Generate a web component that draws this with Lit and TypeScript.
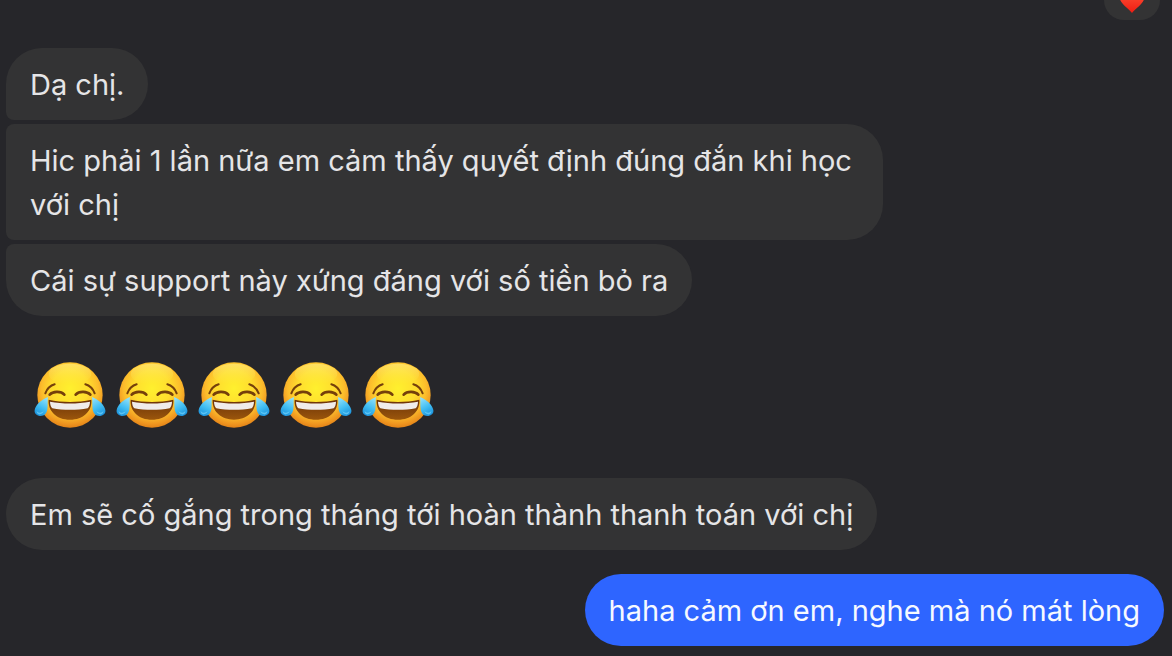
import { LitElement, html, css, svg } from "lit";
import { customElement, property } from "lit/decorators.js";
import { classMap } from "lit/directives/class-map.js";

type Position = "single" | "first" | "middle" | "last";

interface Message {
  text: string;
  position: Position;
}

@customElement("chat-bubble")
class ChatBubble extends LitElement {
  @property() text = "";
  @property() position: Position = "single";
  @property({ type: Boolean }) own = false;

  static styles = css`
    :host {
      display: flex;
    }
    .bubble {
      box-sizing: border-box;
      max-width: 877px;
      margin: 0;
      padding: 15px 24px 13px;
      border-radius: 36px;
      background: #333334;
      color: #e5e5e7;
    }
    .own {
      margin-left: auto;
      background: #2e65ff;
      color: #f6f9ff;
    }
    .first,
    .middle {
      border-bottom-left-radius: 8px;
    }
    .middle,
    .last {
      border-top-left-radius: 8px;
    }
  `;

  render() {
    const classes = { bubble: true, own: this.own, [this.position]: true };
    return html`<p class=${classMap(classes)}>${this.text}</p>`;
  }
}

@customElement("joy-emoji")
class JoyEmoji extends LitElement {
  static styles = css`
    :host {
      display: block;
    }
    .icon {
      display: block;
      width: 82px;
      height: 70px;
    }
  `;

  render() {
    const tear = svg`
      <path d="M84 141C66 148 47 163 44 180C42 191 51 198 62 198C73 198 80 191 82 178C84 166 82 152 84 141Z" fill="url(#tear)"/>
      <path d="M50 182C53 189 63 190 71 184C67 196 49 197 50 182Z" fill="#7fdcff" opacity=".6"/>`;
    return html`
      <svg class="icon" viewBox="27 30 246 210" role="img" aria-label="😂">
        <defs>
          <radialGradient id="face" cx="50%" cy="40%" r="62%">
            <stop offset="0" stop-color="#fff02e" />
            <stop offset=".45" stop-color="#ffdd2e" />
            <stop offset=".7" stop-color="#fcbc2c" />
            <stop offset=".88" stop-color="#ef951f" />
            <stop offset="1" stop-color="#dd7c16" />
          </radialGradient>
          <linearGradient id="shine" x1="0" y1="0" x2="0" y2="1">
            <stop offset="0" stop-color="#fff08a" stop-opacity=".6" />
            <stop offset="1" stop-color="#fff04a" stop-opacity="0" />
          </linearGradient>
          <linearGradient id="mouth" x1="0" y1="0" x2="0" y2="1">
            <stop offset="0" stop-color="#6b3208" />
            <stop offset="1" stop-color="#9b560c" />
          </linearGradient>
          <linearGradient id="tear" x1=".7" y1="0" x2=".3" y2="1">
            <stop offset="0" stop-color="#8fe0fb" />
            <stop offset=".55" stop-color="#3fbcf2" />
            <stop offset="1" stop-color="#1a90da" />
          </linearGradient>
        </defs>
        <circle cx="150" cy="135" r="98" fill="url(#face)" />
        <ellipse cx="150" cy="72" rx="64" ry="31" fill="url(#shine)" />
        <g fill="none" stroke="#75400b" stroke-linecap="round">
          <path d="M76 130C81 117 90 107 104 103" stroke-width="6" />
          <path d="M224 130C219 117 210 107 196 103" stroke-width="6" />
          <path d="M89 134C98 124 122 122 133 134" stroke-width="8" />
          <path d="M167 134C178 122 202 124 211 134" stroke-width="8" />
        </g>
        <path
          d="M86 149C126 158 174 158 214 149C217 183 190 209 150 209C110 209 83 183 86 149Z"
          fill="url(#mouth)"
        />
        <path
          d="M90 155C128 162 172 162 210 155C210 164 207 171 203 175C171 181 129 181 97 175C93 171 90 164 90 155Z"
          fill="#f0ecea"
        />
        <g>${tear}</g>
        <g transform="matrix(-1 0 0 1 300 0)">${tear}</g>
      </svg>
    `;
  }
}

@customElement("app-root")
class AppRoot extends LitElement {
  private opening: Message[] = [
    { text: "Dạ chị.", position: "first" },
    {
      text: "Hic phải 1 lần nữa em cảm thấy quyết định đúng đắn khi học với chị",
      position: "middle",
    },
    { text: "Cái sự support này xứng đáng với số tiền bỏ ra", position: "last" },
  ];

  static styles = css`
    :host {
      display: block;
      box-sizing: border-box;
      min-height: 100vh;
      overflow: hidden;
      padding: 0 8px 10px 6px;
      background: #26262a;
      font-family: Inter, "Noto Sans", sans-serif;
      font-size: 29px;
      line-height: 44px;
    }
    .reaction {
      display: flex;
      justify-content: center;
      align-items: center;
      width: 56px;
      height: 40px;
      margin: -20px 4px 28px auto;
      border-radius: 20px;
      background: #333334;
    }
    .heart {
      width: 28px;
      height: 26px;
    }
    .group {
      display: flex;
      flex-direction: column;
      gap: 4px;
    }
    .emojis {
      display: flex;
      padding: 44px 23px 48px;
    }
    .reply {
      margin-top: 24px;
    }
  `;

  render() {
    return html`
      <main>
        <div class="reaction">
          <svg class="heart" viewBox="0 0 28 26" role="img" aria-label="❤️">
            <defs>
              <linearGradient id="red" x1="0" y1="0" x2="0" y2="1">
                <stop offset="0" stop-color="#ff5a3c" />
                <stop offset="1" stop-color="#f01c12" />
              </linearGradient>
            </defs>
            <path
              d="M14 26C10 21 1 16 1 8C1 3 4 1 8 1C11 1 13 3 14 5C15 3 17 1 20 1C24 1 27 3 27 8C27 16 18 21 14 26Z"
              fill="url(#red)"
            />
          </svg>
        </div>
        <section class="group">
          ${this.opening.map(
            (m) => html`<chat-bubble .text=${m.text} .position=${m.position}></chat-bubble>`
          )}
        </section>
        <div class="emojis">
          ${Array.from({ length: 5 }, () => html`<joy-emoji></joy-emoji>`)}
        </div>
        <chat-bubble text="Em sẽ cố gắng trong tháng tới hoàn thành thanh toán với chị"></chat-bubble>
        <chat-bubble class="reply" own text="haha cảm ơn em, nghe mà nó mát lòng"></chat-bubble>
      </main>
    `;
  }
}
